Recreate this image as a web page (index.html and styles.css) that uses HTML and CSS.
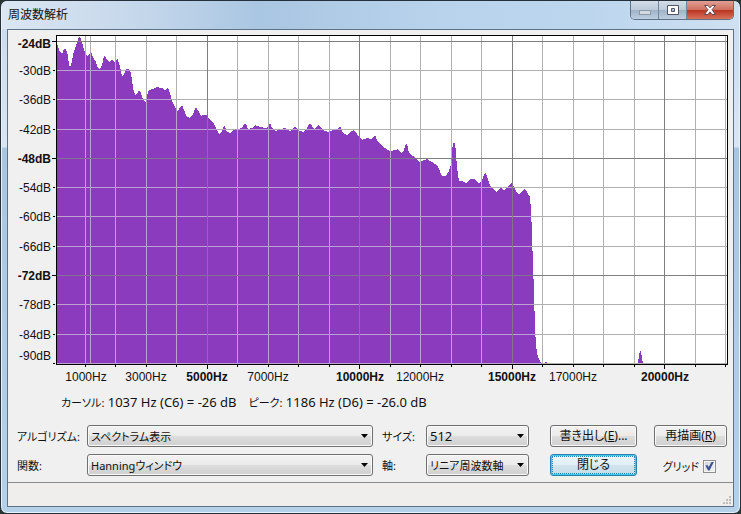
FILE: index.html
```
<!DOCTYPE html>
<html lang="ja">
<head>
  <meta charset="UTF-8" />
  <title>周波数解析</title>
  <link rel="stylesheet" href="styles.css">
</head>
<body>
  <div class="window">
    <header class="titlebar">
      <h1>周波数解析</h1>
      <div class="window-buttons">
        <button type="button" class="win-btn" aria-label="最小化">
          <svg width="14" height="12" viewBox="0 0 14 12"><rect x="1.5" y="6.5" width="11" height="4" fill="#d3d9e0" stroke="#8e99a6" /></svg>
        </button>
        <button type="button" class="win-btn" aria-label="最大化">
          <svg width="14" height="12" viewBox="0 0 14 12"><path d="M1.5 1.5h11v9h-11zM5.500 4.500h3v3h-3z" fill="#fff" fill-rule="evenodd" stroke="#535666" /></svg>
        </button>
        <button type="button" class="win-btn win-close" aria-label="ウィンドウを閉じる">
          <svg width="14" height="12" viewBox="0 0 14 12"><path d="M1.500 1.500h3.500l2 2.300 2-2.300h3.500l-3.500 4.200 3.500 4.800h-3.500l-2-2.600-2 2.600h-3.500l3.500-4.800z" fill="#fff" stroke="#6b4650" /></svg>
        </button>
      </div>
    </header>

    <main class="client">
      <svg class="chart" viewBox="8 30 725 358" role="img" aria-label="スペクトラム">
        <defs>
          <path id="spectrum" d="M57 363.900L57 43 60 52 62 54 64 49 66 49 68 55 69 66 71 66 73 55 75 49 78 39 79 37 81 39 83 46 85 53 87 56 89 55 91 51 93 57 96 62 98 68 100 69 102 65 104 56 105 56 107 60 109 62 112 60 115 62 117 59 118 60 120 67 122 76 124 74 126 69 129 69 131 73 133 88 135 95 137 94 139 90 141 93 143 99 146 103 147 96 149 90 153 89 157 87 160 88 163 88 165 91 168 87 170 93 172 101 177 111 179 109 182 105 184 110 187 117 190 118 193 114 196 107 199 112 201 116 203 115 207 115 209 119 213 122 217 130 219 134 222 131 224 126 225 126 227 132 230 133 233 130 237 129 242 128 244 124 246 124 248 129 252 128 255 125 260 127 265 128 268 127 270 123 272 128 276 131 280 129 285 128 290 131 295 127 299 131 304 132 307 128 309 124 311 124 314 129 319 125 323 130 328 132 333 130 338 129 340 126 343 133 347 135 351 131 354 130 357 134 362 140 367 138 371 139 375 135 378 142 383 147 390 151 395 150 398 149 401 153 404 150 406 144 407 144 409 153 413 156 420 162 427 159 432 162 437 165 439 169 442 176 446 176 449 171 451 165 452 152 453 143 455 143 456 153 457 168 459 181 462 181 466 183 471 179 474 179 479 183 482 180 485 173 486 173 488 180 491 187 493 188 496 192 501 188 504 190 508 186 512 183 514 187 517 193 519 195 522 191 524 189 527 192 530 197 531 210 532 233 533 267 534 290 535 330 536 343 537 354 540 361 542 363.900zM545 363v-1h2v1zM638 363L639 355 640 351 641 351 642 358 643 363z" />
          <clipPath id="spectrum-clip"><use href="#spectrum" /></clipPath>
          <g id="grid">
            <path class="line" d="M85.500 36v327M90.500 36v327M115.500 36v327M146.500 36v327M176.500 36v327M237.500 36v327M268.500 36v327M298.500 36v327M329.500 36v327M390.500 36v327M420.500 36v327M451.500 36v327M481.500 36v327M542.500 36v327M573.500 36v327M603.500 36v327M634.500 36v327M695.500 36v327M725.500 36v327" />
            <path class="line" d="M57 70.500h670M57 99.500h670M57 129.500h670M57 187.500h670M57 216.500h670M57 246.500h670M57 304.500h670M57 334.500h670M57 363.500h670" />
            <path class="line major" d="M207.500 36v327M359.500 36v327M512.500 36v327M664.500 36v327M57 41.500h670M57 158.500h670M57 275.500h670" />
          </g>
        </defs>
        <rect x="56.5" y="35.5" width="671" height="328" fill="#fff" />
        <use href="#grid" class="grid" />
        <use href="#spectrum" class="spectrum" />
        <g clip-path="url(#spectrum-clip)"><use href="#grid" class="grid grid-over" /></g>
        <rect class="frame" x="56.5" y="35.5" width="671" height="329" />

        <!-- tick marks -->
        <path class="ticks" d="M52 41.500h4M53 70.500h2M53 99.500h2M53 129.500h2M52 158.500h4M53 187.500h2M53 216.500h2M53 246.500h2M52 275.500h4M53 304.500h2M53 334.500h2M53 363.500h2" />
        <path class="ticks" d="M85.500 364v3M115.500 364v3M146.500 364v3M176.500 364v3M207.500 364v5M237.500 364v3M268.500 364v3M298.500 364v3M329.500 364v3M359.500 364v5M390.500 364v3M420.500 364v3M451.500 364v3M481.500 364v3M512.500 364v5M542.500 364v3M573.500 364v3M603.500 364v3M634.500 364v3M664.500 364v5M695.500 364v3M725.500 364v3" />

        <g class="axis axis-y">
          <text class="strong" x="51" y="48">-24dB</text>
          <text x="51" y="75">-30dB</text>
          <text x="51" y="104">-36dB</text>
          <text x="51" y="134">-42dB</text>
          <text class="strong" x="51" y="163">-48dB</text>
          <text x="51" y="192">-54dB</text>
          <text x="51" y="221">-60dB</text>
          <text x="51" y="251">-66dB</text>
          <text class="strong" x="51" y="280">-72dB</text>
          <text x="51" y="309">-78dB</text>
          <text x="51" y="339">-84dB</text>
          <text x="51" y="360">-90dB</text>
        </g>
        <g class="axis axis-x">
          <text x="86" y="381">1000Hz</text>
          <text x="146" y="381">3000Hz</text>
          <text class="strong" x="207" y="381">5000Hz</text>
          <text x="268" y="381">7000Hz</text>
          <text class="strong" x="360" y="381">10000Hz</text>
          <text x="420" y="381">12000Hz</text>
          <text class="strong" x="512" y="381">15000Hz</text>
          <text x="573" y="381">17000Hz</text>
          <text class="strong" x="665" y="381">20000Hz</text>
        </g>
      </svg>

      <p class="readout">
        <span><span class="kana">カーソル:</span> 1037 Hz (C6) = -26 dB</span>
        <span><span class="kana">ピーク:</span> 1186 Hz (D6) = -26.0 dB</span>
      </p>

      <form class="controls">
        <label for="algorithm">アルゴリズム:</label>
        <select id="algorithm"><option>スペクトラム表示</option></select>
        <label class="second" for="size">サイズ:</label>
        <select id="size" class="number"><option>512</option></select>
        <button type="button" class="btn export">書き出し(<u>E</u>)...</button>
        <button type="button" class="btn redraw">再描画(<u>R</u>)</button>

        <label for="func">関数:</label>
        <select id="func"><option>Hanningウィンドウ</option></select>
        <label class="second" for="axis">軸:</label>
        <select id="axis"><option>リニア周波数軸</option></select>
        <button type="button" class="btn export default">閉じる</button>
        <label class="check" for="show-grid">グリッド <input type="checkbox" id="show-grid" checked></label>
      </form>

      <footer class="statusbar">
        <svg width="10" height="10" viewBox="0 0 10 10"><path d="M7 1h2v2h-2zM7 4h2v2h-2zM4 4h2v2h-2zM7 7h2v2h-2zM4 7h2v2h-2zM1 7h2v2h-2z" fill="#bdbdbd" /></svg>
      </footer>
    </main>
  </div>
</body>
</html>
```
FILE: styles.css
```
* {
  box-sizing: border-box;
}
body {
  margin: 0;
  background: #26352f;
  color: #111;
  font-family: "Noto Sans", "Noto Sans CJK JP", sans-serif;
  font-size: 12px;
  font-feature-settings: "palt";
}
.window {
  display: flex;
  flex-direction: column;
  min-height: 100vh;
  padding: 0 6px 6px;
  border: 1px solid #25303a;
  border-radius: 7px;
  background: linear-gradient(180deg, #c9dbee 0, #d9e5f2 146px, #a9c6e0 147px, #b5d1ea 100%);
  box-shadow: inset 0 0 0 1px #e8f1fa;
}
.titlebar {
  display: flex;
  justify-content: space-between;
  align-items: flex-start;
  height: 28px;
  margin: 0 -5px;
  padding: 0 5px;
  border-radius: 6px 6px 0 0;
  background: linear-gradient(90deg, #dbe6f2 0, #c3d6ea 20%, #a9c6e2 35%, #b9d3ec 60%, #bcd6ee 80%, #cfe0f1 100%);
}
.titlebar h1 {
  margin: 0;
  padding: 5px 1px;
  font-size: 12px;
  font-weight: normal;
  line-height: 18px;
}
.window-buttons {
  display: flex;
  border: 1px solid #5f7184;
  border-top: 0;
  border-radius: 0 0 5px 5px;
  overflow: hidden;
}
.win-btn {
  display: flex;
  justify-content: center;
  align-items: center;
  width: 28px;
  height: 18px;
  padding: 0;
  border: 0;
  border-right: 1px solid #74879a;
  background: linear-gradient(#d3dde8, #bccada 48%, #9fb1c5 50%, #bccfe2);
}
.win-close {
  width: 46px;
  border-right: 0;
  background: linear-gradient(#e0a094, #d0705f 48%, #b8331f 50%, #d8715a);
}

.client {
  display: flex;
  flex-direction: column;
  flex: 1;
  border: 1px solid #5d7286;
  background: #f0f0f0;
}
.chart {
  display: block;
  width: 100%;
  shape-rendering: crispEdges;
}
.grid {
  --line: #b0b0b0;
  --major: #7f7f7f;
}
.grid-over {
  --line: #c0a0d4;
  --major: #83748c;
}
.line {
  fill: none;
  stroke: var(--line);
}
.major {
  stroke: var(--major);
}
.spectrum {
  fill: #8b3bbd;
}
.frame {
  fill: none;
  stroke: #000;
}
.ticks {
  stroke: #000;
}
.axis {
  fill: #111;
  font-family: "Liberation Sans", Arial, sans-serif;
  font-size: 12px;
}
.axis-y {
  text-anchor: end;
}
.axis-x {
  text-anchor: middle;
}
.strong {
  font-weight: bold;
}

.readout {
  display: flex;
  gap: 12px;
  margin: 4px 53px 12px;
  font-size: 13px;
  line-height: 20px;
}
.kana {
  font-size: 11px;
}
.controls {
  display: grid;
  grid-template-columns: 70px 1fr 53px 103px 108px 90px;
  grid-auto-rows: 22px;
  row-gap: 7px;
  align-items: center;
  padding: 0 6px 6px 9px;
  font-size: 11px;
}
.second {
  padding-left: 9px;
}
select,
.btn {
  height: 22px;
  margin: 0;
  border: 1px solid #707070;
  border-radius: 3px;
  background: linear-gradient(#f2f2f2, #ebebeb 48%, #dddddd 52%, #cfcfcf);
  box-shadow: inset 0 0 0 1px #fafafa;
  color: #111;
  font: inherit;
  font-feature-settings: inherit;
}
select {
  width: 100%;
  padding: 0 18px 0 3px;
  appearance: none;
  background: url("data:image/svg+xml,%3Csvg xmlns='http://www.w3.org/2000/svg' width='7' height='4'%3E%3Cpath d='M0 0h7L3.500 4z'/%3E%3C/svg%3E") no-repeat right 4px center, linear-gradient(#f2f2f2, #ebebeb 48%, #dddddd 52%, #cfcfcf);
}
.number {
  font-size: 13px;
}
.btn {
  padding: 0;
  font-size: 12px;
  line-height: 18px;
}
.export {
  margin-left: 21px;
}
.redraw {
  margin-left: 17px;
}
.default {
  border-color: #2c80a8;
  background: linear-gradient(#eef5f9, #e2eff6 48%, #d2e4ee 52%, #c6dae6);
  box-shadow: inset 0 0 0 1px #45c8ef;
  outline: 1px dotted #2c80a8;
  outline-offset: -3px;
}
.check {
  display: flex;
  justify-content: flex-end;
  align-items: center;
  gap: 4px;
  padding: 2px 11px 0 0;
}
.check input {
  display: grid;
  place-content: center;
  width: 13px;
  height: 13px;
  margin: 0;
  border: 1px solid #8e8f8f;
  appearance: none;
  background: linear-gradient(135deg, #cdd3da, #f4f4f6);
  box-shadow: inset 0 0 0 1px #f4f4f4;
}
.check input:checked::before {
  content: "";
  width: 9px;
  height: 9px;
  background: #3c4f90;
  clip-path: polygon(5% 45%, 25% 38%, 42% 62%, 75% 0, 100% 0, 50% 100%, 35% 100%);
}
.statusbar {
  display: flex;
  flex: 1;
  justify-content: flex-end;
  align-items: flex-end;
  min-height: 24px;
  padding: 1px;
  border-top: 1px solid #8b8b8b;
  background: #f0eded;
}
```
